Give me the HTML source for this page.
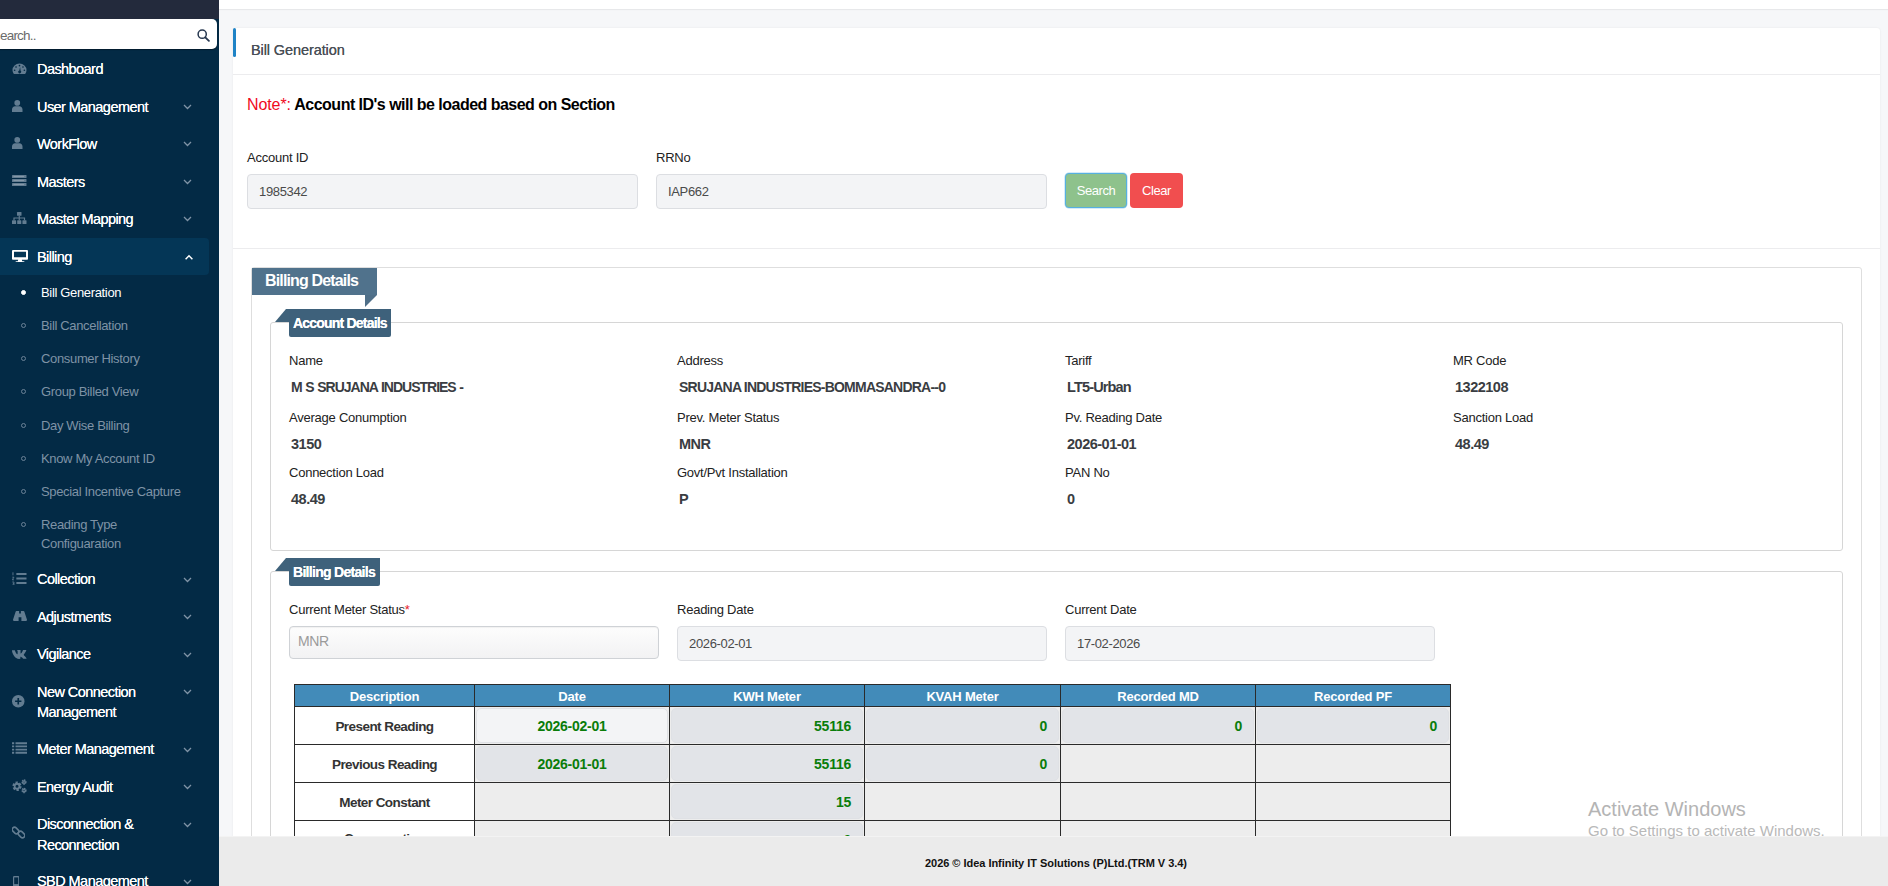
<!DOCTYPE html>
<html>
<head>
<meta charset="utf-8">
<title>Bill Generation</title>
<style>
*{box-sizing:border-box;margin:0;padding:0}
html,body{width:1888px;height:886px;overflow:hidden}
body{font-family:"Liberation Sans",sans-serif;background:#f6f7f9;position:relative;color:#222}
.abs{position:absolute}
/* ---------- sidebar ---------- */
#side{z-index:4;position:absolute;left:0;top:0;width:219px;height:886px;background:#032a45;overflow:hidden}
#side .topband{position:absolute;left:0;top:0;width:219px;height:19px;background:#232a3c}
#side .search{position:absolute;left:-10px;top:19px;width:227px;height:30px;background:#fff;border-radius:5px;box-shadow:0 1px 1px rgba(0,0,0,.35)}
#side .search span{position:absolute;left:10px;top:9px;font-size:13.5px;color:#6b6b6b;letter-spacing:-.8px;line-height:16px}
.mi{position:absolute;left:37px;font-size:14.5px;color:#fff;white-space:nowrap;line-height:20px;letter-spacing:-.56px;text-shadow:0 0 .6px #fff}
.sm{position:absolute;left:41px;font-size:13px;color:#7f93a6;white-space:nowrap;line-height:19px;letter-spacing:-.34px;margin-top:1px}
.sm.on{color:#fff}
.dot{position:absolute;left:21px;width:5px;height:5px;border-radius:50%;border:1px solid #6b8297}
.dot.on{background:#fff;border-color:#fff}
.chev{position:absolute;left:183px;width:9px;height:6px}
.ico{position:absolute;left:12px}
#billbg{position:absolute;left:0;top:238px;width:209px;height:37px;background:#043656;border-radius:0 4px 4px 0}
/* ---------- main ---------- */
#topstrip{position:absolute;left:219px;top:0;width:1669px;height:9px;background:#fff;box-shadow:0 1px 1px rgba(0,0,0,.06)}
#card{position:absolute;left:233px;top:28px;width:1647px;height:820px;background:#fff;border-radius:3px;box-shadow:0 0 2px rgba(0,0,0,.08)}
#hbar{position:absolute;left:233px;top:28px;width:3px;height:29px;background:#1f83c6;border-radius:2px}
#htitle{position:absolute;left:251px;top:41px;font-size:14.5px;color:#4a5058;line-height:18px;text-shadow:0 0 .5px #4a5058;letter-spacing:-.1px}
.hline{position:absolute;left:233px;width:1647px;height:1px;background:#ececee}
.lbl{position:absolute;font-size:13px;color:#222;line-height:16px;white-space:nowrap;letter-spacing:-.24px}
.val{position:absolute;font-size:14.5px;font-weight:bold;color:#3a3d42;line-height:17px;white-space:nowrap;letter-spacing:-.5px}
.inp{position:absolute;height:35px;background:#f3f4f6;border:1px solid #dcdee2;border-radius:4px;font-size:13px;color:#4a4a4a;line-height:33px;padding-left:11px;letter-spacing:-.35px}
.btn{position:absolute;top:173px;height:35px;border-radius:4px;color:#fff;font-size:13px;line-height:33px;text-align:center;letter-spacing:-.45px}
/* fieldsets */
.fs{position:absolute;border:1px solid #d6d6d6;border-radius:3px}
.tag{position:absolute;color:#fff;font-weight:bold;white-space:nowrap}
/* table */
.th{position:absolute;top:684px;height:23px;background:#428bb9;border:1px solid #2a2a2a;color:#fff;font-weight:bold;font-size:13px;text-align:center;line-height:21px;padding-top:1px;letter-spacing:-.2px}
.td{position:absolute;height:39px;border:1px solid #2a2a2a;background:#ededed}
.td.w{background:#fff}
.td .pill{position:absolute;left:1px;top:1px;right:1px;bottom:1px;background:#e2e4e8;border-radius:5px;border:1px solid #dfe1e5}
.td .t{position:absolute;left:0;right:0;top:11px;font-size:14px;font-weight:bold;line-height:17px;text-align:center;color:#333;letter-spacing:-.25px}
.td.w .t{font-size:13.5px;letter-spacing:-.56px}
.r1 .t{top:11px}
.td .g{color:#0a7d0a}
.td .r{text-align:right;right:13px}
#foot{position:absolute;left:219px;top:836px;width:1669px;height:50px;background:#ebebeb;border-top:1px solid #f3f3f3;z-index:3}
#foot div{position:absolute;left:0;width:1674px;top:19px;text-align:center;font-size:11px;font-weight:bold;color:#111;line-height:14px;letter-spacing:-.03px}
</style>
</head>
<body>
<div id="topstrip"></div>
<div id="card"></div>
<div id="hbar"></div>
<div id="htitle">Bill Generation</div>
<div class="hline" style="top:74px"></div>


<!-- NOTE + FORM -->
<div class="abs" style="left:247px;top:95px;font-size:16px;line-height:20px;white-space:nowrap"><span style="color:#f00a1e;letter-spacing:-.1px">Note*:</span> <span style="font-weight:bold;color:#000;letter-spacing:-.52px;margin-left:-1px">Account ID's will be loaded based on Section</span></div>
<div class="lbl" style="left:247px;top:150px">Account ID</div>
<div class="inp" style="left:247px;top:174px;width:391px">1985342</div>
<div class="lbl" style="left:656px;top:150px">RRNo</div>
<div class="inp" style="left:656px;top:174px;width:391px">IAP662</div>
<div class="btn" style="left:1065px;width:62px;background:#8ec28c;border:1px solid #56b0e0;box-shadow:0 0 0 .5px rgba(86,176,224,.5)">Search</div>
<div class="btn" style="left:1130px;width:53px;background:#f14e4f;line-height:35px">Clear</div>
<div class="hline" style="top:248px"></div>

<!-- OUTER FIELDSET -->
<div class="fs" style="left:251px;top:267px;width:1611px;height:640px;border-color:#dedede"></div>
<div class="tag" style="left:252px;top:268px;width:125px;height:27px;background:#50728c;font-size:16px;line-height:25px;padding-left:13px;letter-spacing:-.85px">Billing Details</div>
<svg class="abs" style="left:365px;top:295px" width="12" height="12" viewBox="0 0 12 12"><path d="M0 0h12L0 12z" fill="#4f6f88"/></svg>

<!-- ACCOUNT DETAILS -->
<div class="fs" style="left:270px;top:322px;width:1573px;height:229px"></div>
<svg class="abs" style="left:275px;top:309px" width="15" height="13" viewBox="0 0 15 13" preserveAspectRatio="none"><path d="M15 0v13H0L11 0z" fill="#3f627b"/></svg>
<div class="tag" style="left:289px;top:309px;width:102px;height:28px;background:#3e617b;font-size:14px;line-height:28px;padding-left:4px;letter-spacing:-.8px;border-radius:0 0 2px 2px;text-shadow:0 0 .5px #fff">Account Details</div>

<div class="lbl" style="left:289px;top:353px">Name</div>
<div class="val" style="left:291px;top:379px;font-size:14px;letter-spacing:-1px;word-spacing:.7px">M S SRUJANA INDUSTRIES -</div>
<div class="lbl" style="left:677px;top:353px">Address</div>
<div class="val" style="left:679px;top:379px;font-size:14px;letter-spacing:-.78px">SRUJANA INDUSTRIES-BOMMASANDRA--0</div>
<div class="lbl" style="left:1065px;top:353px">Tariff</div>
<div class="val" style="left:1067px;top:379px;letter-spacing:-.85px">LT5-Urban</div>
<div class="lbl" style="left:1453px;top:353px">MR Code</div>
<div class="val" style="left:1455px;top:379px">1322108</div>

<div class="lbl" style="left:289px;top:410px">Average Conumption</div>
<div class="val" style="left:291px;top:436px">3150</div>
<div class="lbl" style="left:677px;top:410px">Prev. Meter Status</div>
<div class="val" style="left:679px;top:436px">MNR</div>
<div class="lbl" style="left:1065px;top:410px">Pv. Reading Date</div>
<div class="val" style="left:1067px;top:436px">2026-01-01</div>
<div class="lbl" style="left:1453px;top:410px">Sanction Load</div>
<div class="val" style="left:1455px;top:436px">48.49</div>

<div class="lbl" style="left:289px;top:465px">Connection Load</div>
<div class="val" style="left:291px;top:491px">48.49</div>
<div class="lbl" style="left:677px;top:465px">Govt/Pvt Installation</div>
<div class="val" style="left:679px;top:491px">P</div>
<div class="lbl" style="left:1065px;top:465px">PAN No</div>
<div class="val" style="left:1067px;top:491px">0</div>

<!-- BILLING DETAILS INNER -->
<div class="fs" style="left:270px;top:571px;width:1573px;height:330px"></div>
<svg class="abs" style="left:275px;top:558px" width="15" height="13" viewBox="0 0 15 13" preserveAspectRatio="none"><path d="M15 0v13H0L11 0z" fill="#3f627b"/></svg>
<div class="tag" style="left:289px;top:558px;width:91px;height:28px;background:#3e617b;font-size:14px;line-height:28px;padding-left:4px;letter-spacing:-.7px;border-radius:0 0 2px 2px;text-shadow:0 0 .5px #fff">Billing Details</div>

<div class="lbl" style="left:289px;top:602px">Current Meter Status<span style="color:#e8202a">*</span></div>
<div class="inp" style="left:289px;top:626px;width:370px;height:33px;background:linear-gradient(#fdfdfd,#f2f2f3);border-color:#cfd2d6;color:#9b9b9b;font-size:14px;padding-left:8px;line-height:29px;box-shadow:inset 0 1px 1px rgba(0,0,0,.05)">MNR</div>
<div class="lbl" style="left:677px;top:602px">Reading Date</div>
<div class="inp" style="left:677px;top:626px;width:370px;height:35px">2026-02-01</div>
<div class="lbl" style="left:1065px;top:602px">Current Date</div>
<div class="inp" style="left:1065px;top:626px;width:370px;height:35px">17-02-2026</div>
<div class="th" style="left:294px;width:181px">Description</div>
<div class="th" style="left:474px;width:196px">Date</div>
<div class="th" style="left:669px;width:196px">KWH Meter</div>
<div class="th" style="left:864px;width:197px">KVAH Meter</div>
<div class="th" style="left:1060px;width:196px">Recorded MD</div>
<div class="th" style="left:1255px;width:196px">Recorded PF</div>
<div class="td w r1" style="left:294px;top:706px;width:181px"><div class="t">Present Reading</div></div>
<div class="td r1" style="left:474px;top:706px;width:196px"><div class="pill" style="background:#f3f4f6"></div><div class="t g">2026-02-01</div></div>
<div class="td r1" style="left:669px;top:706px;width:196px"><div class="pill"></div><div class="t g r">55116</div></div>
<div class="td r1" style="left:864px;top:706px;width:197px"><div class="pill"></div><div class="t g r">0</div></div>
<div class="td r1" style="left:1060px;top:706px;width:196px"><div class="pill"></div><div class="t g r">0</div></div>
<div class="td r1" style="left:1255px;top:706px;width:196px"><div class="pill"></div><div class="t g r">0</div></div>
<div class="td w" style="left:294px;top:744px;width:181px"><div class="t">Previous Reading</div></div>
<div class="td" style="left:474px;top:744px;width:196px"><div class="pill"></div><div class="t g">2026-01-01</div></div>
<div class="td" style="left:669px;top:744px;width:196px"><div class="pill"></div><div class="t g r">55116</div></div>
<div class="td" style="left:864px;top:744px;width:197px"><div class="pill"></div><div class="t g r">0</div></div>
<div class="td" style="left:1060px;top:744px;width:196px"></div>
<div class="td" style="left:1255px;top:744px;width:196px"></div>
<div class="td w" style="left:294px;top:782px;width:181px"><div class="t">Meter Constant</div></div>
<div class="td" style="left:474px;top:782px;width:196px"></div>
<div class="td" style="left:669px;top:782px;width:196px"><div class="pill"></div><div class="t g r">15</div></div>
<div class="td" style="left:864px;top:782px;width:197px"></div>
<div class="td" style="left:1060px;top:782px;width:196px"></div>
<div class="td" style="left:1255px;top:782px;width:196px"></div>
<div class="td w" style="left:294px;top:820px;width:181px"><div class="t" style="top:9px">Consumption</div></div>
<div class="td" style="left:474px;top:820px;width:196px"></div>
<div class="td" style="left:669px;top:820px;width:196px"><div class="pill"></div><div class="t g r">0</div></div>
<div class="td" style="left:864px;top:820px;width:197px"></div>
<div class="td" style="left:1060px;top:820px;width:196px"></div>
<div class="td" style="left:1255px;top:820px;width:196px"></div>
<!-- watermark -->
<div class="abs" style="z-index:5;left:1588px;top:797px;font-size:20px;line-height:24px;color:#b4b4b4;white-space:nowrap">Activate Windows</div>
<div class="abs" style="z-index:5;left:1588px;top:822px;font-size:15px;line-height:18px;color:#b9b9b9;white-space:nowrap">Go to Settings to activate Windows.</div>

<!-- SIDEBAR -->
<div id="side">
 <div class="topband"></div>
 <div class="search"><span>earch..</span><svg style="position:absolute;left:207px;top:10px" width="13" height="13" viewBox="0 0 13 13"><circle cx="5.200" cy="5.200" r="4.100" fill="none" stroke="#26374f" stroke-width="1.500"/><path d="M8.300 8.300l3.600 3.600" stroke="#26374f" stroke-width="1.800" stroke-linecap="round"/></svg></div>
 <div id="billbg"></div>
 <!--SIDE-->
 <svg class="ico" style="left:12px;top:63px" width="15" height="11.5" viewBox="0 0 16 13" preserveAspectRatio="none"><path d="M8 .5A7.5 7.5 0 0 0 .5 8c0 1.600.5 3 1.300 4.200.2.3.5.3.8.3h10.800c.3 0 .6 0 .8-.3.8-1.200 1.300-2.600 1.300-4.200A7.500 7.500 0 0 0 8 .500z" fill="#627c91"/><circle cx="8" cy="3" r=".9" fill="#032a45"/><circle cx="4.300" cy="4.500" r=".9" fill="#032a45"/><circle cx="11.700" cy="4.500" r=".9" fill="#032a45"/><circle cx="2.800" cy="8.200" r=".9" fill="#032a45"/><circle cx="13.200" cy="8.200" r=".9" fill="#032a45"/><path d="M8.600 4.500l-.8 4a1.600 1.600 0 1 0 1.400.3z" fill="#032a45"/></svg>
 <div class="mi" style="top:59.0px">Dashboard</div>
 <svg class="ico" style="left:12px;top:100px" width="10.5" height="12" viewBox="0 0 12 14" preserveAspectRatio="none"><circle cx="6" cy="3.400" r="3.300" fill="#627c91"/><path d="M0 14v-3C0 9 1.500 7.300 3.600 7.300h4.800C10.500 7.300 12 9 12 11v3z" fill="#627c91"/></svg>
 <div class="mi" style="top:97.0px">User Management</div>
 <svg class="chev" style="top:104px" viewBox="0 0 9 6"><path d="M1 1l3.500 3.500L8 1" stroke="#7f93a6" stroke-width="1.300" fill="none"/></svg>
 <svg class="ico" style="left:12px;top:137px" width="10.5" height="12" viewBox="0 0 12 14" preserveAspectRatio="none"><circle cx="6" cy="3.400" r="3.300" fill="#627c91"/><path d="M0 14v-3C0 9 1.500 7.300 3.600 7.300h4.800C10.500 7.300 12 9 12 11v3z" fill="#627c91"/></svg>
 <div class="mi" style="top:134.0px">WorkFlow</div>
 <svg class="chev" style="top:141px" viewBox="0 0 9 6"><path d="M1 1l3.500 3.500L8 1" stroke="#7f93a6" stroke-width="1.300" fill="none"/></svg>
 <svg class="ico" style="left:12px;top:175px" width="14.5" height="11" viewBox="0 0 15 11" preserveAspectRatio="none"><rect x="0" y="0" width="15" height="3" rx=".6" fill="#627c91"/><rect x="0" y="4" width="15" height="3" rx=".6" fill="#627c91"/><rect x="0" y="8" width="15" height="3" rx=".6" fill="#627c91"/><rect x="1.500" y="1" width="11" height="1" fill="#8598a8"/><rect x="1.500" y="5" width="11" height="1" fill="#8598a8"/><rect x="1.500" y="9" width="11" height="1" fill="#8598a8"/></svg>
 <div class="mi" style="top:172.0px">Masters</div>
 <svg class="chev" style="top:179px" viewBox="0 0 9 6"><path d="M1 1l3.500 3.500L8 1" stroke="#7f93a6" stroke-width="1.300" fill="none"/></svg>
 <svg class="ico" style="left:12px;top:212px" width="14.5" height="12" viewBox="0 0 16 13" preserveAspectRatio="none"><rect x="5.500" y="0" width="5" height="4" rx=".6" fill="#627c91"/><rect x="0" y="9" width="4.500" height="4" rx=".6" fill="#627c91"/><rect x="5.750" y="9" width="4.500" height="4" rx=".6" fill="#627c91"/><rect x="11.500" y="9" width="4.500" height="4" rx=".6" fill="#627c91"/><path d="M8 4v5M2.200 9V6.500h11.600V9" stroke="#627c91" stroke-width="1.300" fill="none"/></svg>
 <div class="mi" style="top:209.0px">Master Mapping</div>
 <svg class="chev" style="top:216px" viewBox="0 0 9 6"><path d="M1 1l3.500 3.500L8 1" stroke="#7f93a6" stroke-width="1.300" fill="none"/></svg>
 <svg class="ico" style="left:12px;top:249.5px" width="16" height="12.5" viewBox="0 0 16 14" preserveAspectRatio="none"><path d="M1.200 0h13.600c.7 0 1.200.5 1.200 1.200v8.600c0 .7-.5 1.200-1.200 1.200H9.800l.5 1.600h1.500c.4 0 .7.300.7.700s-.3.700-.7.700H4.200c-.4 0-.7-.3-.7-.7s.3-.7.700-.7h1.500l.5-1.600H1.200C.500 11 0 10.500 0 9.800V1.200C0 .500.500 0 1.200 0zm.8 2v6h12V2z" fill="#fff" fill-rule="evenodd"/></svg>
 <div class="mi" style="top:247.0px">Billing</div>
 <svg class="chev" style="top:254px;left:184.500px;width:8px;height:6px" viewBox="0 0 8 6"><path d="M.6 5.200l3.400-3.400 3.400 3.400" stroke="#fff" stroke-width="1.500" fill="none"/></svg>
 <svg class="ico" style="left:12px;top:572px" width="14.5" height="13" viewBox="0 0 15 13" preserveAspectRatio="none"><path d="M4.500 2h10.500M4.500 6.500h10.500M4.500 11h10.500" stroke="#627c91" stroke-width="1.900"/><path d="M1 .3v3M.3 5.200h1.700L.3 7.800h1.800M.3 10h1.700v3H.3M.9 11.500h1" stroke="#627c91" stroke-width=".9" fill="none"/></svg>
 <div class="mi" style="top:569.0px">Collection</div>
 <svg class="chev" style="top:577px" viewBox="0 0 9 6"><path d="M1 1l3.500 3.500L8 1" stroke="#7f93a6" stroke-width="1.300" fill="none"/></svg>
 <svg class="ico" style="left:12.5px;top:611px" width="14" height="10" viewBox="0 0 16 12" preserveAspectRatio="none"><path d="M4 0h3v3h2V0h3c.5 0 .9.300 1 .800L16 10.500c.1.800-.4 1.500-1.200 1.500H9.600V7.500H6.400V12H1.200C.400 12-.1 11.300 0 10.500L3 .800C3.100.300 3.500 0 4 0z" fill="#627c91"/></svg>
 <div class="mi" style="top:607.0px">Adjustments</div>
 <svg class="chev" style="top:614px" viewBox="0 0 9 6"><path d="M1 1l3.500 3.500L8 1" stroke="#7f93a6" stroke-width="1.300" fill="none"/></svg>
 <svg class="ico" style="left:12px;top:649.5px" width="15" height="9" viewBox="0 0 17 10" preserveAspectRatio="none"><path d="M0 .300h2.800c.3 0 .5.200.6.400C4.300 3 5.300 4.700 6 4.700c.3 0 .4-.3.400-1.400V1.500C6.300.400 5.700.300 5.700 0h3.600c.3 0 .4.200.4.500v3c0 .3.100.5.300.5.400 0 1.400-1.300 2.400-3.600.1-.3.300-.4.600-.4h2.800c.5 0 .5.300.4.600-.3 1.200-2.700 4.300-2.700 4.300-.2.300-.3.500 0 .800.200.300 2.600 2.300 2.900 3.500.1.400-.1.600-.5.600h-2.700c-.6 0-.8-.4-1.800-1.400-.9-.9-1.300-1-1.500-1-.3 0-.4.100-.4.600v1.300c0 .4-.1.600-1.100.600C5.700 10 3.800 8.800 2.400 6.700.500 3.800 0 1.600 0 .800 0 .500.100.300 0 .300z" fill="#627c91"/></svg>
 <div class="mi" style="top:644.0px">Vigilance</div>
 <svg class="chev" style="top:652px" viewBox="0 0 9 6"><path d="M1 1l3.500 3.500L8 1" stroke="#7f93a6" stroke-width="1.300" fill="none"/></svg>
 <svg class="ico" style="left:12px;top:695px" width="12.5" height="12.5" viewBox="0 0 13 13" preserveAspectRatio="none"><circle cx="6.500" cy="6.500" r="6.500" fill="#627c91"/><path d="M6.500 3.200v6.600M3.200 6.500h6.600" stroke="#032a45" stroke-width="1.700"/></svg>
 <div class="mi" style="top:682.0px">New Connection</div>
 <div class="mi" style="top:702.0px">Management</div>
 <svg class="chev" style="top:689px" viewBox="0 0 9 6"><path d="M1 1l3.500 3.500L8 1" stroke="#7f93a6" stroke-width="1.300" fill="none"/></svg>
 <svg class="ico" style="left:12px;top:741.5px" width="15" height="12" viewBox="0 0 15 12" preserveAspectRatio="none"><path d="M3.500 1.200h11.500M3.500 4.400h11.500M3.500 7.600h11.500M3.500 10.800h11.500" stroke="#627c91" stroke-width="1.900"/><path d="M0 1.200h2.200M0 4.400h2.200M0 7.600h2.200M0 10.800h2.200" stroke="#627c91" stroke-width="1.900"/></svg>
 <div class="mi" style="top:739.0px">Meter Management</div>
 <svg class="chev" style="top:747px" viewBox="0 0 9 6"><path d="M1 1l3.500 3.500L8 1" stroke="#7f93a6" stroke-width="1.300" fill="none"/></svg>
 <svg class="ico" style="left:12px;top:779px" width="15.5" height="14.5" viewBox="0 0 17 15" preserveAspectRatio="none"><circle cx="5.500" cy="7.500" r="3.700" fill="none" stroke="#627c91" stroke-width="2.600" stroke-dasharray="2.300 1.570"/><circle cx="5.500" cy="7.500" r="2.600" fill="none" stroke="#627c91" stroke-width="1.900"/><circle cx="13.200" cy="3.200" r="1.900" fill="none" stroke="#627c91" stroke-width="1.900" stroke-dasharray="1.400 .590"/><circle cx="13.200" cy="3.200" r="1.300" fill="none" stroke="#627c91" stroke-width="1.200"/><circle cx="13.200" cy="11.800" r="1.900" fill="none" stroke="#627c91" stroke-width="1.900" stroke-dasharray="1.400 .590"/><circle cx="13.200" cy="11.800" r="1.300" fill="none" stroke="#627c91" stroke-width="1.200"/></svg>
 <div class="mi" style="top:777.0px">Energy Audit</div>
 <svg class="chev" style="top:784px" viewBox="0 0 9 6"><path d="M1 1l3.500 3.500L8 1" stroke="#7f93a6" stroke-width="1.300" fill="none"/></svg>
 <svg class="ico" style="left:12px;top:826px" width="13" height="13" viewBox="0 0 13 13" preserveAspectRatio="none"><rect x="-.200" y="2.200" width="7.400" height="4.600" rx="2.300" transform="rotate(45 3.500 4.500)" fill="none" stroke="#627c91" stroke-width="1.600"/><rect x="5.800" y="6.200" width="7.400" height="4.600" rx="2.300" transform="rotate(45 9.500 8.500)" fill="none" stroke="#627c91" stroke-width="1.600"/></svg>
 <div class="mi" style="top:814.0px">Disconnection &amp;</div>
 <div class="mi" style="top:834.5px">Reconnection</div>
 <svg class="chev" style="top:822px" viewBox="0 0 9 6"><path d="M1 1l3.500 3.500L8 1" stroke="#7f93a6" stroke-width="1.300" fill="none"/></svg>
 <svg class="ico" style="left:12.8px;top:875.5px" width="6.4" height="11" viewBox="0 0 8 14" preserveAspectRatio="none"><rect x="0" y="0" width="8" height="14" rx="1.500" fill="#627c91"/><rect x="1.500" y="1.800" width="5" height="8.500" fill="#032a45"/></svg>
 <div class="mi" style="top:871.0px">SBD Management</div>
 <svg class="chev" style="top:879px" viewBox="0 0 9 6"><path d="M1 1l3.500 3.500L8 1" stroke="#7f93a6" stroke-width="1.300" fill="none"/></svg>
 <div class="dot on" style="top:290px"></div>
 <div class="sm on" style="top:282px">Bill Generation</div>
 <div class="dot" style="top:323px"></div>
 <div class="sm" style="top:315px">Bill Cancellation</div>
 <div class="dot" style="top:356px"></div>
 <div class="sm" style="top:348px">Consumer History</div>
 <div class="dot" style="top:389px"></div>
 <div class="sm" style="top:381px">Group Billed View</div>
 <div class="dot" style="top:423px"></div>
 <div class="sm" style="top:415px">Day Wise Billing</div>
 <div class="dot" style="top:456px"></div>
 <div class="sm" style="top:448px">Know My Account ID</div>
 <div class="dot" style="top:489px"></div>
 <div class="sm" style="top:481px">Special Incentive Capture</div>
 <div class="dot" style="top:522px"></div>
 <div class="sm" style="top:514px">Reading Type</div>
 <div class="sm" style="top:533px">Configuaration</div>
 <!--/SIDE-->
</div>

<div id="foot"><div>2026 © Idea Infinity IT Solutions (P)Ltd.(TRM V 3.4)</div></div>
</body>
</html>
